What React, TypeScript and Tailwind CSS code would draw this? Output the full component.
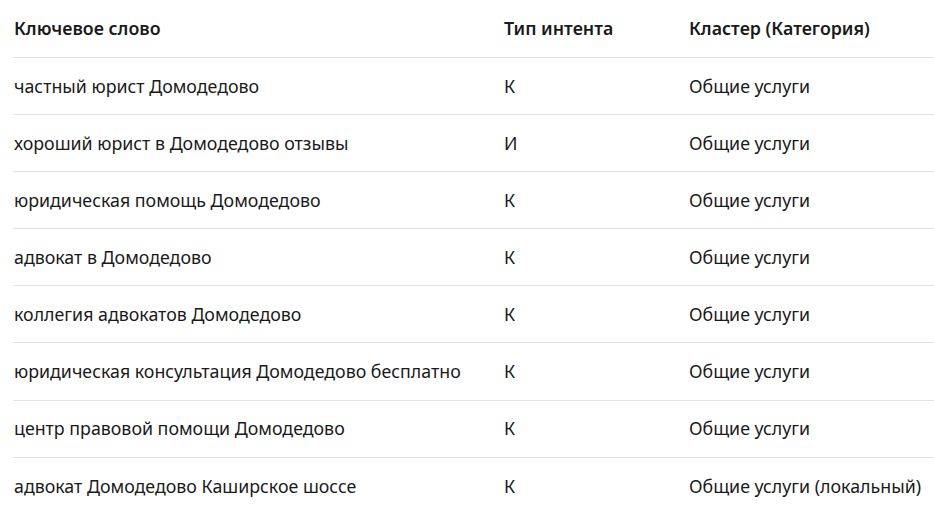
import React from "react";

const rows: [string, string, string][] = [
  ["частный юрист Домодедово", "К", "Общие услуги"],
  ["хороший юрист в Домодедово отзывы", "И", "Общие услуги"],
  ["юридическая помощь Домодедово", "К", "Общие услуги"],
  ["адвокат в Домодедово", "К", "Общие услуги"],
  ["коллегия адвокатов Домодедово", "К", "Общие услуги"],
  ["юридическая консультация Домодедово бесплатно", "К", "Общие услуги"],
  ["центр правовой помощи Домодедово", "К", "Общие услуги"],
  ["адвокат Домодедово Каширское шоссе", "К", "Общие услуги (локальный)"],
];

export default function App() {
  return (
    <div
      className="w-[934px] h-[508px] bg-white overflow-hidden pl-[13px] text-[17.8px] text-[#1a1a1a]"
      style={{ fontFamily: '"Noto Sans", "Open Sans", sans-serif' }}
    >
      <div className="grid grid-cols-[491px_185px_1fr] h-[58px] items-center border-b border-[#e3e3e3] font-semibold">
        <div className="pl-[1px]">Ключевое слово</div>
        <div>Тип интента</div>
        <div>Кластер (Категория)</div>
      </div>
      {rows.map((r, i) => (
        <div
          key={i}
          className={`grid grid-cols-[491px_185px_1fr] h-[57.1px] items-center ${i < rows.length - 1 ? "border-b border-[#e3e3e3]" : ""}`}
        >
          <div className="pl-[1px] whitespace-nowrap">{r[0]}</div>
          <div>{r[1]}</div>
          <div className="whitespace-nowrap">{r[2]}</div>
        </div>
      ))}
    </div>
  );
}
